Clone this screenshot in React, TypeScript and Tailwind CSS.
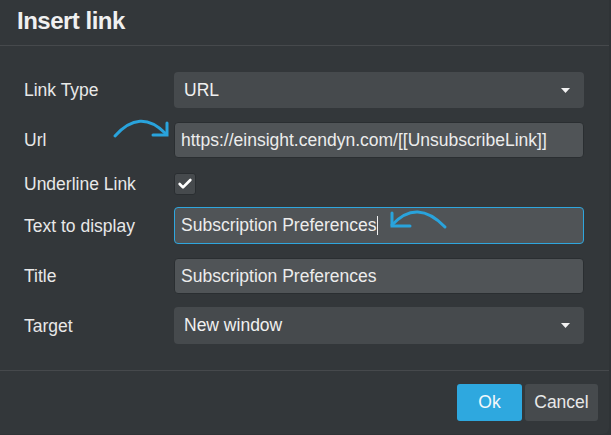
import { Check } from "lucide-react";

function Caret() {
  return (
    <svg width="9" height="5" viewBox="0 0 9 5" className="ml-auto">
      <path d="M0 0 H9 L4.5 5 Z" fill="#f2f2f2" />
    </svg>
  );
}

export default function App() {
  const label = "w-[150px] shrink-0 text-[17.5px] leading-[22px] text-[#e8e8e8]";
  const input =
    "w-[410px] h-[36px] rounded-[4px] bg-[#505457] border border-[#2a2e31] px-[6px] flex items-center text-[17.5px] text-[#ececec] whitespace-nowrap";

  return (
    <div className="relative w-[611px] h-[435px] bg-[#2f3336] font-['Liberation_Sans',Arial,sans-serif] overflow-hidden">
      <div className="w-[609px] h-[434px] bg-[#33373a] rounded-br-[6px] flex flex-col">
        {/* Header */}
        <div className="h-[46px] shrink-0 px-[17px] pb-[4px] flex items-center border-b border-[#46494c]">
          <h1 className="text-[24px] font-bold text-[#f0f0f0] tracking-[-0.5px]">Insert link</h1>
        </div>

        {/* Body */}
        <div className="px-[24px] pt-[26px] pb-[26px] border-b border-[#46494c]">
          <div className="flex items-center">
            <span className={label}>Link Type</span>
            <div className="w-[410px] h-[36px] rounded-[4px] bg-[#464a4d] pl-[10px] pr-[14px] flex items-center text-[17.5px] text-[#f0f0f0]">
              URL
              <Caret />
            </div>
          </div>

          <div className="flex items-center mt-[14px]">
            <span className={label}>Url</span>
            <div className={input}>https://einsight.cendyn.com/[[UnsubscribeLink]]</div>
          </div>

          <div className="flex items-center mt-[15px]">
            <span className={label}>Underline Link</span>
            <div className="w-[22px] h-[22px] rounded-[3px] bg-[#464a4d] border border-[#2a2e31] flex items-center justify-center">
              <Check size={16} strokeWidth={4} color="#ffffff" />
            </div>
          </div>

          <div className="flex items-center mt-[12px]">
            <span className={label}>Text to display</span>
            <div className="w-[410px] h-[37px] rounded-[4px] bg-[#505457] border border-[#2fa6de] px-[6px] flex items-center text-[17.5px] text-[#ececec]">
              Subscription Preferences
              <span className="w-px h-[19px] bg-[#f0f0f0]" />
            </div>
          </div>

          <div className="flex items-center mt-[14px]">
            <span className={label}>Title</span>
            <div className={input}>Subscription Preferences</div>
          </div>

          <div className="flex items-center mt-[13px]">
            <span className={label}>Target</span>
            <div className="w-[410px] h-[37px] rounded-[4px] bg-[#464a4d] pl-[10px] pr-[14px] flex items-center text-[17.5px] text-[#f0f0f0]">
              New window
              <Caret />
            </div>
          </div>
        </div>

        {/* Footer */}
        <div className="flex justify-end gap-[3px] pt-[13px] pr-[11px]">
          <button className="w-[65px] h-[37px] rounded-[3px] bg-[#2ea8df] text-[17.5px] text-[#f4f8fb]">Ok</button>
          <button className="w-[73px] h-[37px] rounded-[3px] bg-[#464a4d] text-[17.5px] text-[#e8e8e8]">Cancel</button>
        </div>
      </div>

      {/* annotation arrows */}
      <svg className="absolute inset-0 pointer-events-none" width="611" height="435">
        <g fill="none" stroke="#29a3dc" strokeWidth="3" strokeLinecap="round" strokeLinejoin="miter">
          <path d="M115 136 Q140 108 165 133" />
          <path d="M167 123 V135 H153" />
          <path d="M445 227 Q417 198 392 225" />
          <path d="M392 213 V226 H410" />
        </g>
      </svg>
    </div>
  );
}
